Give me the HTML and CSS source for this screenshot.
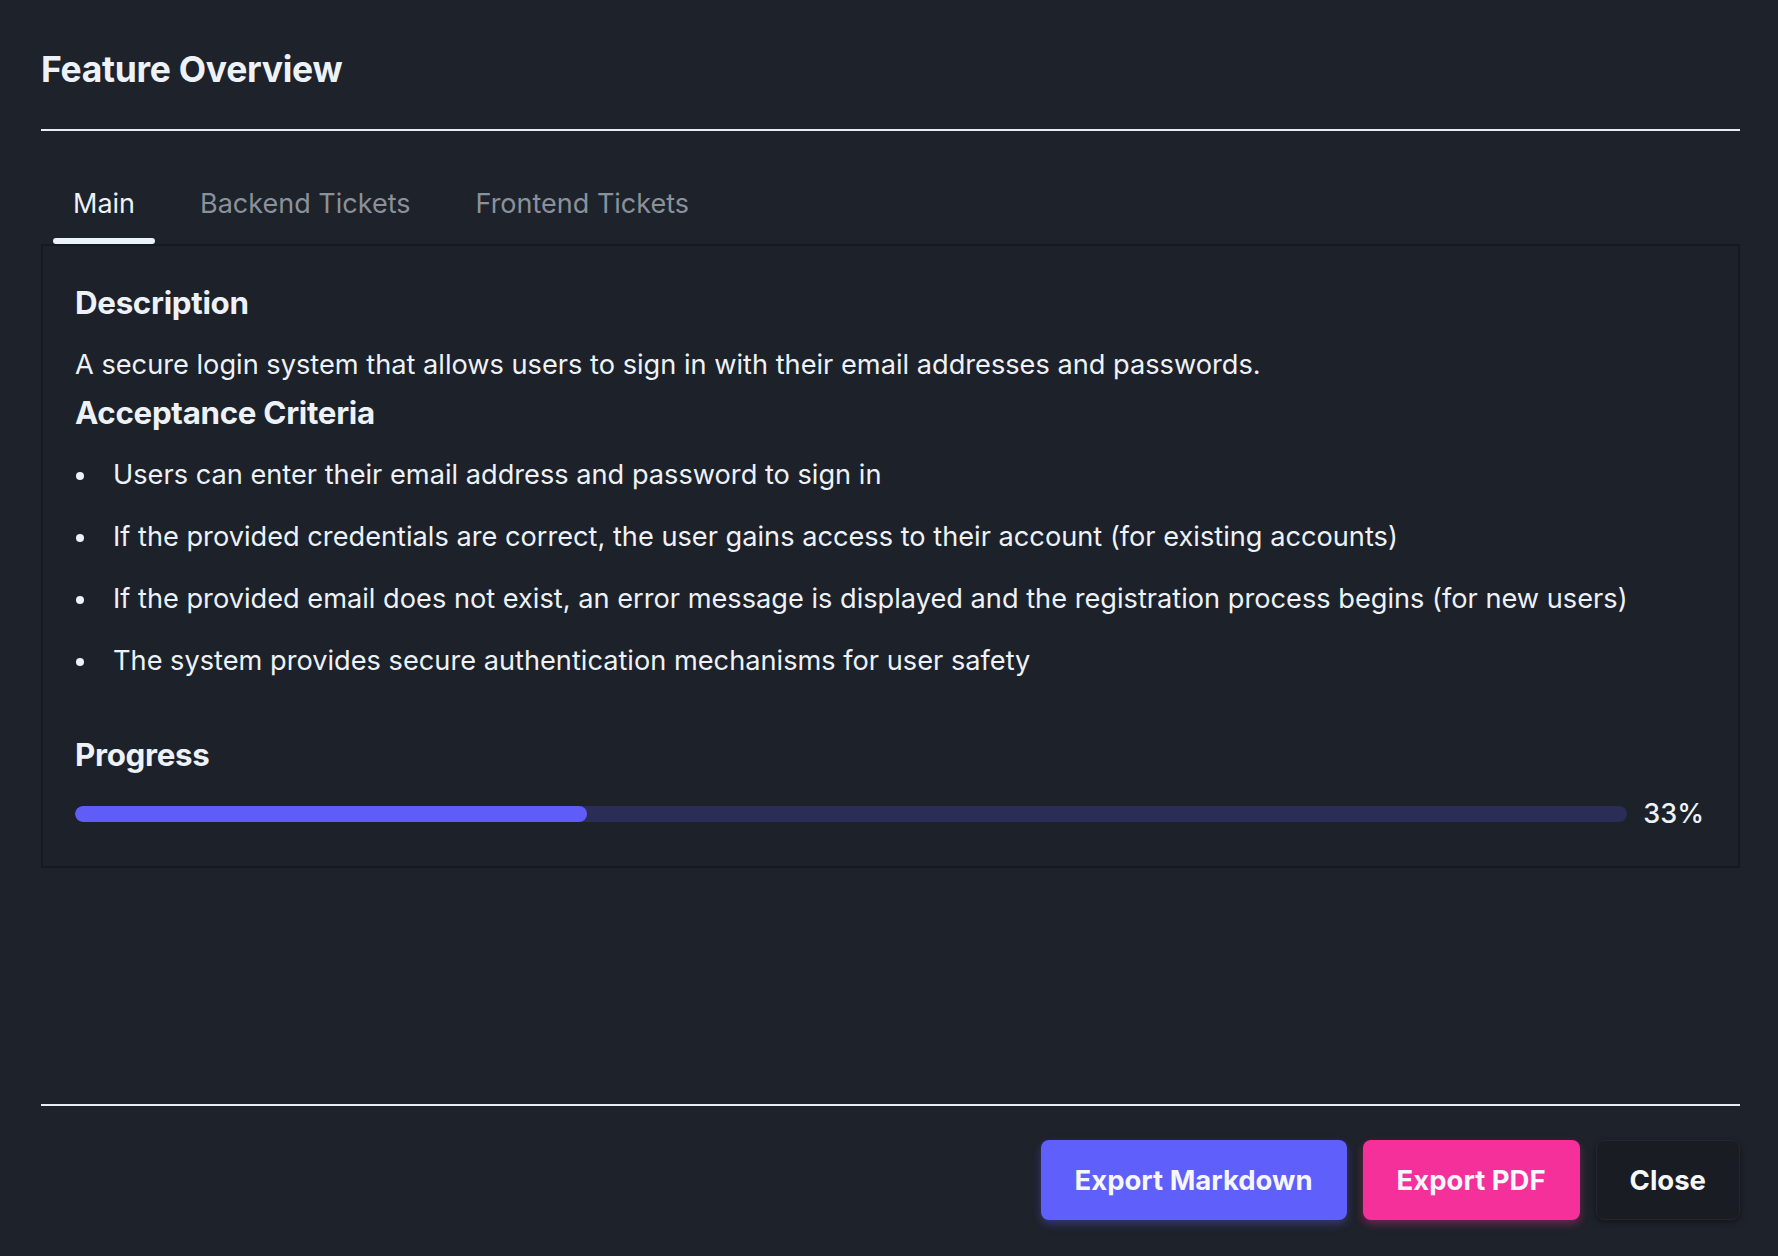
FILE: index.html
```html
<!DOCTYPE html>
<html lang="en">
<head>
<meta charset="utf-8">
<title>Feature Overview</title>
<link rel="stylesheet" href="styles.css">
</head>
<body>
<div class="modal">
  <header class="modal-header">
    <h1 class="modal-title">Feature Overview</h1>
  </header>
  <div class="modal-body">
    <nav class="tabs">
      <button class="tab tab-active">Main</button>
      <button class="tab">Backend Tickets</button>
      <button class="tab">Frontend Tickets</button>
    </nav>
    <section class="panel">
      <h2 class="section-title">Description</h2>
      <p class="desc">A secure login system that allows users to sign in with their email addresses and passwords.</p>
      <h2 class="section-title criteria-title">Acceptance Criteria</h2>
      <ul class="criteria">
        <li>Users can enter their email address and password to sign in</li>
        <li>If the provided credentials are correct, the user gains access to their account (for existing accounts)</li>
        <li>If the provided email does not exist, an error message is displayed and the registration process begins (for new users)</li>
        <li>The system provides secure authentication mechanisms for user safety</li>
      </ul>
      <h2 class="section-title progress-title">Progress</h2>
      <div class="progress-row">
        <div class="progress-track"><div class="progress-fill" style="width:33%"></div></div>
        <span class="progress-label">33%</span>
      </div>
    </section>
  </div>
  <footer class="modal-footer">
    <button class="btn btn-primary">Export Markdown</button>
    <button class="btn btn-pink">Export PDF</button>
    <button class="btn btn-dark">Close</button>
  </footer>
</div>
</body>
</html>
```
FILE: styles.css
```css
* { box-sizing: border-box; }
html, body { margin: 0; height: 100%; }
body {
  background: #1e222a;
  color: #edf2f8;
  font-family: Inter, "Noto Sans", sans-serif;
}
.modal {
  height: 1256px;
  padding: 0 38px 0 41px;
  display: flex;
  flex-direction: column;
}
.modal-header {
  height: 131px;
  border-bottom: 2px solid #e6edf6;
  display: flex;
  align-items: flex-start;
}
.modal-title {
  margin: 49px 0 0;
  font-size: 35.5px;
  font-weight: 700;
  letter-spacing: -0.3px;
  line-height: 42px;
}
.modal-body {
  flex: 1;
  padding-top: 36px;
}
.tabs {
  display: flex;
  gap: 25px;
  padding-left: 12px;
  height: 77px;
}
.tab {
  background: none;
  border: none;
  font-family: inherit;
  font-size: 27px;
  color: #8b919b;
  padding: 0 20px;
  height: 77px;
  line-height: 1;
  padding-bottom: 4px;
  position: relative;
}
.tab-active { color: #edf2f8; }
.tab-active::after {
  content: "";
  position: absolute;
  left: 0; right: 0; bottom: 0;
  height: 6px;
  border-radius: 3px;
  background: #eaf2fc;
}
.panel {
  background: #1d2129;
  border: 2px solid #161920;
  padding: 37px 34px 36px 32px;
}
.section-title {
  margin: 0;
  font-size: 31.3px;
  font-weight: 700;
  line-height: 40px;
  letter-spacing: -0.3px;
}
.desc {
  margin: 25px 0 11px;
  font-size: 27.2px;
  line-height: 34px;
}
.criteria {
  list-style: none;
  margin: 11px 0 0;
  padding: 0;
}
.criteria li {
  font-size: 27.2px;
  line-height: 34px;
  padding: 14px 0 14px 38px;
  position: relative;
}
.criteria li::before {
  content: "";
  position: absolute;
  left: 1px;
  top: 28px;
  width: 8px;
  height: 8px;
  border-radius: 50%;
  background: #edf2f8;
}
.progress-title { margin-top: 43px; }
.progress-row {
  display: flex;
  align-items: center;
  gap: 16px;
  margin-top: 23px;
}
.progress-track {
  flex: 1;
  height: 16px;
  border-radius: 8px;
  background: #2c2d56;
  overflow: hidden;
}
.progress-fill {
  height: 100%;
  background: #5f5cf8;
  border-radius: 8px;
}
.progress-label {
  font-size: 27px;
  line-height: 32px;
  font-weight: 500;
}
.modal-footer {
  border-top: 2px solid #e6edf6;
  height: 152px;
  display: flex;
  justify-content: flex-end;
  align-items: flex-start;
  gap: 16px;
  padding-top: 34px;
}
.btn {
  height: 80px;
  border-radius: 8px;
  border: none;
  font-family: inherit;
  font-size: 27.5px;
  font-weight: 700;
  padding: 0 34px;
  color: #f5f7fb;
}
.btn-primary {
  background: #5f5ffc;
  box-shadow: 0 4px 8px rgba(95, 95, 252, 0.35);
}
.btn-pink {
  background: #f5309a;
  box-shadow: 0 4px 8px rgba(245, 48, 154, 0.35);
}
.btn-dark {
  background: #191c22;
  border: 1px solid #23272f;
  box-shadow: 0 2px 6px rgba(0, 0, 0, 0.4);
  padding: 0 33px;
}
```
